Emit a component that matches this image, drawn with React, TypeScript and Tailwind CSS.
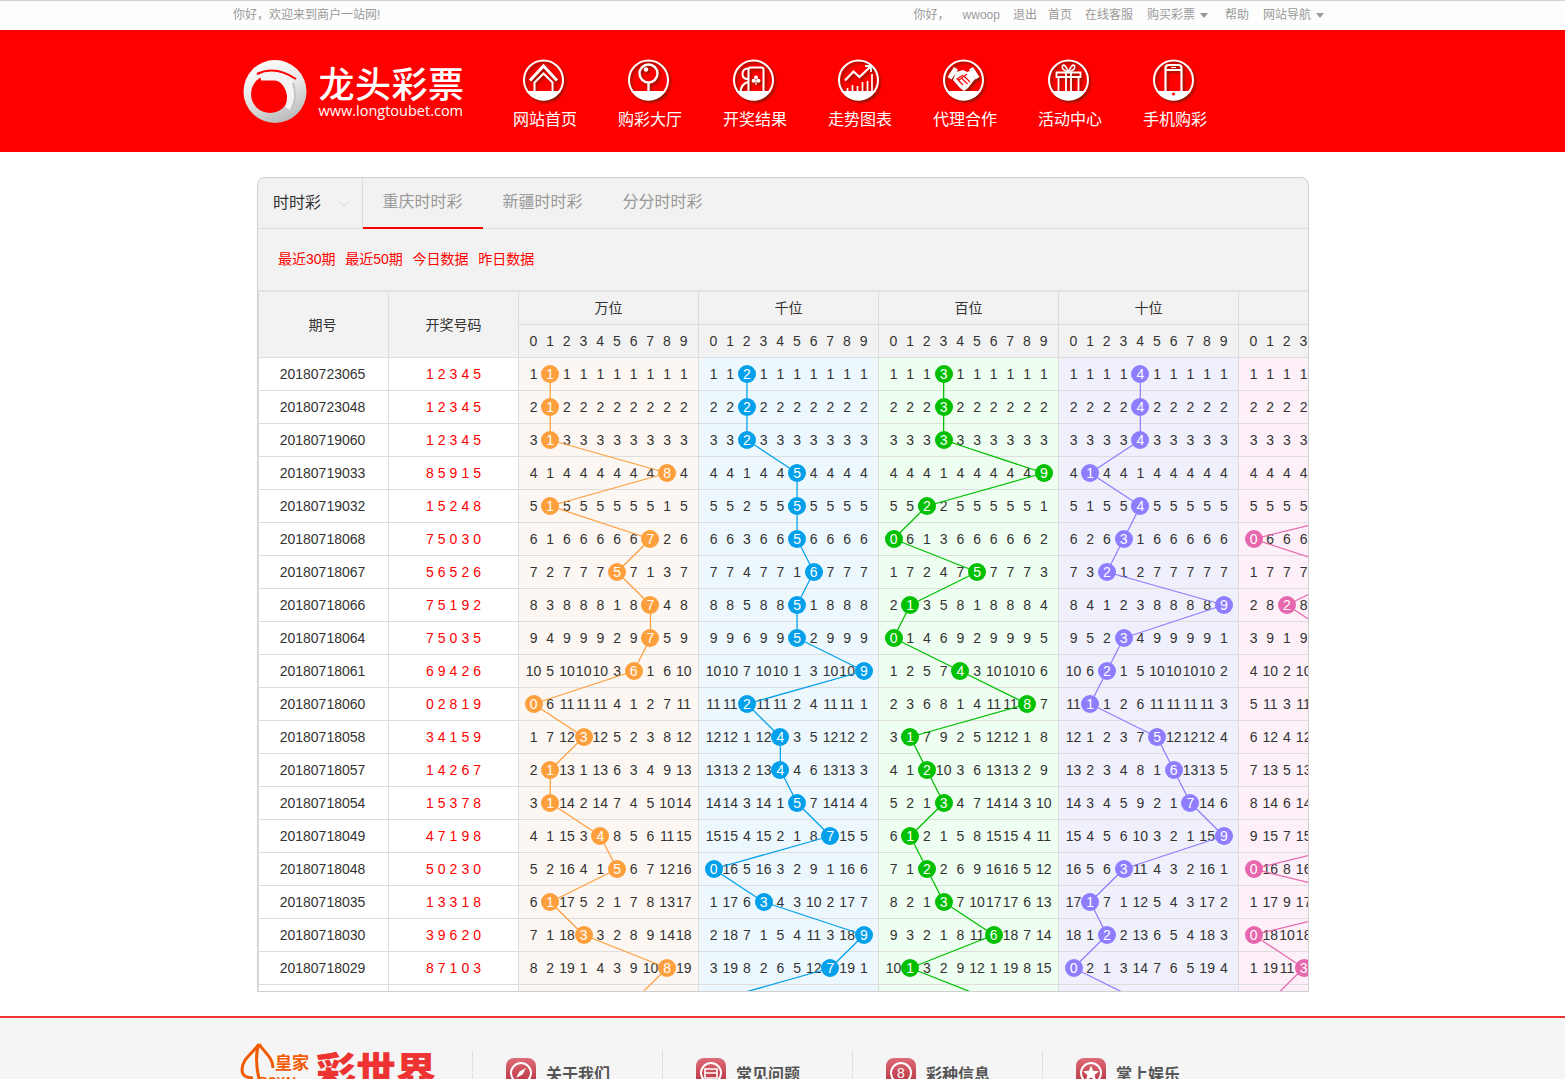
const rows = [
  { id: '20180723065', code: '12345', cols: ['1 1 1 1 1 1 1 1 1 1', '1 1 2 1 1 1 1 1 1 1', '1 1 1 3 1 1 1 1 1 1', '1 1 1 1 4 1 1 1 1 1', '1 1 1 1'] },
  { id: '20180723048', code: '12345', cols: ['2 1 2 2 2 2 2 2 2 2', '2 2 2 2 2 2 2 2 2 2', '2 2 2 3 2 2 2 2 2 2', '2 2 2 2 4 2 2 2 2 2', '2 2 2 2'] },
  { id: '20180719060', code: '12345', cols: ['3 1 3 3 3 3 3 3 3 3', '3 3 2 3 3 3 3 3 3 3', '3 3 3 3 3 3 3 3 3 3', '3 3 3 3 4 3 3 3 3 3', '3 3 3 3'] },
  { id: '20180719033', code: '85915', cols: ['4 1 4 4 4 4 4 4 8 4', '4 4 1 4 4 5 4 4 4 4', '4 4 4 1 4 4 4 4 4 9', '4 1 4 4 1 4 4 4 4 4', '4 4 4 4'] },
  { id: '20180719032', code: '15248', cols: ['5 1 5 5 5 5 5 5 1 5', '5 5 2 5 5 5 5 5 5 5', '5 5 2 2 5 5 5 5 5 1', '5 1 5 5 4 5 5 5 5 5', '5 5 5 5'] },
  { id: '20180718068', code: '75030', cols: ['6 1 6 6 6 6 6 7 2 6', '6 6 3 6 6 5 6 6 6 6', '0 6 1 3 6 6 6 6 6 2', '6 2 6 3 1 6 6 6 6 6', '0 6 6 6'] },
  { id: '20180718067', code: '56526', cols: ['7 2 7 7 7 5 7 1 3 7', '7 7 4 7 7 1 6 7 7 7', '1 7 2 4 7 5 7 7 7 3', '7 3 2 1 2 7 7 7 7 7', '1 7 7 7'] },
  { id: '20180718066', code: '75192', cols: ['8 3 8 8 8 1 8 7 4 8', '8 8 5 8 8 5 1 8 8 8', '2 1 3 5 8 1 8 8 8 4', '8 4 1 2 3 8 8 8 8 9', '2 8 2 8'] },
  { id: '20180718064', code: '75035', cols: ['9 4 9 9 9 2 9 7 5 9', '9 9 6 9 9 5 2 9 9 9', '0 1 4 6 9 2 9 9 9 5', '9 5 2 3 4 9 9 9 9 1', '3 9 1 9'] },
  { id: '20180718061', code: '69426', cols: ['10 5 10 10 10 3 6 1 6 10', '10 10 7 10 10 1 3 10 10 9', '1 2 5 7 4 3 10 10 10 6', '10 6 2 1 5 10 10 10 10 2', '4 10 2 10'] },
  { id: '20180718060', code: '02819', cols: ['0 6 11 11 11 4 1 2 7 11', '11 11 2 11 11 2 4 11 11 1', '2 3 6 8 1 4 11 11 8 7', '11 1 1 2 6 11 11 11 11 3', '5 11 3 11'] },
  { id: '20180718058', code: '34159', cols: ['1 7 12 3 12 5 2 3 8 12', '12 12 1 12 4 3 5 12 12 2', '3 1 7 9 2 5 12 12 1 8', '12 1 2 3 7 5 12 12 12 4', '6 12 4 12'] },
  { id: '20180718057', code: '14267', cols: ['2 1 13 1 13 6 3 4 9 13', '13 13 2 13 4 4 6 13 13 3', '4 1 2 10 3 6 13 13 2 9', '13 2 3 4 8 1 6 13 13 5', '7 13 5 13'] },
  { id: '20180718054', code: '15378', cols: ['3 1 14 2 14 7 4 5 10 14', '14 14 3 14 1 5 7 14 14 4', '5 2 1 3 4 7 14 14 3 10', '14 3 4 5 9 2 1 7 14 6', '8 14 6 14'] },
  { id: '20180718049', code: '47198', cols: ['4 1 15 3 4 8 5 6 11 15', '15 15 4 15 2 1 8 7 15 5', '6 1 2 1 5 8 15 15 4 11', '15 4 5 6 10 3 2 1 15 9', '9 15 7 15'] },
  { id: '20180718048', code: '50230', cols: ['5 2 16 4 1 5 6 7 12 16', '0 16 5 16 3 2 9 1 16 6', '7 1 2 2 6 9 16 16 5 12', '16 5 6 3 11 4 3 2 16 1', '0 16 8 16'] },
  { id: '20180718035', code: '13318', cols: ['6 1 17 5 2 1 7 8 13 17', '1 17 6 3 4 3 10 2 17 7', '8 2 1 3 7 10 17 17 6 13', '17 1 7 1 12 5 4 3 17 2', '1 17 9 17'] },
  { id: '20180718030', code: '39620', cols: ['7 1 18 3 3 2 8 9 14 18', '2 18 7 1 5 4 11 3 18 9', '9 3 2 1 8 11 6 18 7 14', '18 1 2 2 13 6 5 4 18 3', '0 18 10 18'] },
  { id: '20180718029', code: '87103', cols: ['8 2 19 1 4 3 9 10 8 19', '3 19 8 2 6 5 12 7 19 1', '10 1 3 2 9 12 1 19 8 15', '0 2 1 3 14 7 6 5 19 4', '1 19 11 3'] },
  { id: '', code: '60641', cols: ['', '', '', '', ''] },
]

const groups = [
  { name: '万位', bg: 'bg-[#fcf7f2]', ball: 'bg-[#fd9f3c]', line: '#fd9f3c' },
  { name: '千位', bg: 'bg-[#ecf8fe]', ball: 'bg-[#02a0ea]', line: '#02a0ea' },
  { name: '百位', bg: 'bg-[#eefef0]', ball: 'bg-[#00c000]', line: '#00c000' },
  { name: '十位', bg: 'bg-[#f0f0fc]', ball: 'bg-[#8f7dff]', line: '#8f7dff' },
  { name: '个位', bg: 'bg-[#fdf0f8]', ball: 'bg-[#e667ae]', line: '#e667ae' },
]

const navItems = ['网站首页', '购彩大厅', '开奖结果', '走势图表', '代理合作', '活动中心', '手机购彩']
const digits = [0, 1, 2, 3, 4, 5, 6, 7, 8, 9]

function Ground() {
  return <path d="M5.1 33H35.9A19.5 19.5 0 0 1 5.1 33Z" fill="#fff" />
}

function NavIcon({ index }: { index: number }) {
  return (
    <svg width="41" height="42" viewBox="0 0 41 42" fill="none" stroke="#fff" strokeWidth="2" className="drop-shadow-[2px_2px_1px_rgba(110,30,0,0.75)]">
      <circle cx="20.5" cy="21" r="19.5" />
      <Ground />
      {index === 0 && (
        <>
          <path d="M7 21.5 20.5 7 34 21.5" strokeWidth="3" />
          <path d="M11.5 33V23.5L20.5 14.5 29.5 23.5V33" />
        </>
      )}
      {index === 1 && (
        <>
          <circle cx="20.5" cy="14.5" r="9" strokeWidth="2.4" />
          <circle cx="18" cy="10.5" r="2.2" fill="#fff" stroke="none" />
          <path d="M20.5 23.5V33" strokeWidth="2.4" />
        </>
      )}
      {index === 2 && (
        <>
          <rect x="15.5" y="8.5" width="15" height="26" rx="2" />
          <path d="M15 9.5Q9.5 9.5 9.5 15 9.5 20 15 20M15 23Q8 25 7.5 33" />
          <circle cx="23" cy="18.5" r="2" fill="#fff" stroke="none" />
          <circle cx="20.6" cy="21.8" r="2" fill="#fff" stroke="none" />
          <circle cx="25.4" cy="21.8" r="2" fill="#fff" stroke="none" />
          <path d="M23 21V26" strokeWidth="1.2" />
        </>
      )}
      {index === 3 && (
        <>
          <path d="M7 21.5 15.5 12.5 21.5 18 32.5 7.5" strokeWidth="2.2" />
          <path d="M27 7H33V13" strokeWidth="1.8" />
          <path d="M9.5 33V29M14.5 33V26M19.5 33V27M24.5 33V23M29.5 33V22M34 33V15" strokeWidth="1.7" />
        </>
      )}
      {index === 4 && (
        <>
          <path d="M4.5 18 11 8 15 10.5 8.5 20.5ZM36.5 18 30 8 26 10.5 32.5 20.5Z" fill="#fff" stroke="none" />
          <path d="M13 13 20 11 24 13 28 11.5 32 20 25 29 21 32 17 29 10 21Z" fill="#fff" stroke="none" />
          <path d="M20 16 14 20 16 21 24 15M15 21 20 26M18.5 19 24.5 25M21.5 17.5 27 23" stroke="#f00" strokeWidth="1.1" />
        </>
      )}
      {index === 5 && (
        <>
          <path d="M8.5 13.5H32.5V18H8.5ZM10.5 18H30.5V33H10.5ZM18 13.5V33M23 13.5V33" strokeWidth="1.8" />
          <path d="M20.5 13Q13 11 14.5 6.5 17 4.5 20.5 13ZM20.5 13Q28 11 26.5 6.5 24 4.5 20.5 13Z" strokeWidth="1.6" />
        </>
      )}
      {index === 6 && (
        <>
          <rect x="12.5" y="6" width="16" height="29" rx="3" strokeWidth="2.2" />
          <path d="M12.5 11H28.5" />
          <path d="M18 8.5H23" strokeWidth="1" />
          <circle cx="20.5" cy="35" r="1.5" fill="#f00" stroke="none" />
        </>
      )}
    </svg>
  )
}

function Logo() {
  return (
    <svg width="64" height="66" viewBox="0 0 64 66">
      <defs>
        <linearGradient id="ring" x1="0.25" y1="0" x2="0.65" y2="1">
          <stop offset="0" stopColor="#ffffff" />
          <stop offset="0.5" stopColor="#e6e6e6" />
          <stop offset="1" stopColor="#b9b9b9" />
        </linearGradient>
      </defs>
      <circle cx="32" cy="32.5" r="31.5" fill="url(#ring)" />
      <circle cx="27" cy="35" r="19" fill="#f00" />
      <path d="M14 15Q32 6 53 20" fill="none" stroke="#f00" strokeWidth="2" />
      <path d="M17 15.5 28 13.5Q42 14 50 21.5 56 36 48 51.5L42 48Q47 36 40 26.5 36 21.5 31.5 21.5L18 21.5Z" fill="#f4f4f4" />
      <path d="M50 24Q55 38 48 51" fill="none" stroke="#c4c4c4" strokeWidth="2" />
    </svg>
  )
}

function FooterIcon({ index }: { index: number }) {
  return (
    <div className="w-[30px] h-[30px] rounded-[8px] bg-gradient-to-b from-[#dd6b78] to-[#b12536] flex items-center justify-center">
      <svg width="24" height="24" viewBox="0 0 24 24" fill="none" stroke="#fff" strokeWidth="2">
        <circle cx="12" cy="12" r="10" />
        {index === 0 && <path d="M17 7 13.5 13.5 7 17 10.5 10.5Z" fill="#fff" stroke="none" />}
        {index === 1 && <path d="M6 8H18V17H6ZM6 12H18" strokeWidth="1.6" />}
        {index === 2 && (
          <text x="12" y="17" textAnchor="middle" fontSize="14" fill="#fff" stroke="none" fontFamily="Liberation Sans">8</text>
        )}
        {index === 3 && <path d="M12 4.5 14.2 9.8 20 10.2 15.6 13.9 17 19.5 12 16.5 7 19.5 8.4 13.9 4 10.2 9.8 9.8Z" fill="#fff" stroke="none" />}
      </svg>
    </div>
  )
}

function Caret() {
  return <span className="ml-[5px] w-0 h-0 border-x-[4px] border-x-transparent border-t-[5px] border-t-[#999]" />
}

function TrendLines() {
  const x = (g: number, i: number) => 261 + 180 * g + 6.2 + (i + 0.5) * 16.7
  const y = (r: number) => 16 + 33 * r
  return (
    <svg className="absolute left-0 top-0" width="1050" height="660" fill="none">
      {groups.map((group, g) => (
        <g key={group.name} stroke={group.line} strokeWidth="1.25">
          {rows.slice(1).map((row, r) => (
            <line key={r} x1={x(g, Number(rows[r].code[g]))} y1={y(r)} x2={x(g, Number(row.code[g]))} y2={y(r + 1)} />
          ))}
        </g>
      ))}
    </svg>
  )
}

export default function App() {
  return (
    <div className="h-[1079px] overflow-hidden bg-white text-[#333] font-['Liberation_Sans','Noto_Sans_CJK_SC',sans-serif]">
      {/* top strip */}
      <div className="h-[30px] border-t border-[#d0d0d0] bg-[#fdfdfd] text-xs text-[#999]">
        <div className="ml-[233px] w-[1091px] h-[28px] flex items-center justify-between">
          <span>你好，欢迎来到商户一站网!</span>
          <div className="flex items-center">
            <span>你好，</span>
            <span className="ml-[13px]">wwoop</span>
            <span className="ml-[13px]">退出</span>
            <span className="ml-[11px]">首页</span>
            <span className="ml-[13px]">在线客服</span>
            <span className="ml-[14px]">购买彩票</span>
            <Caret />
            <span className="ml-[17px]">帮助</span>
            <span className="ml-[14px]">网站导航</span>
            <Caret />
          </div>
        </div>
      </div>

      {/* red header */}
      <div className="h-[122px] bg-[#f00]">
        <div className="mx-auto w-[1100px] flex">
          <div className="w-[260px] shrink-0 pl-[10px] pt-[29px] flex">
            <Logo />
            <div className="ml-[12px] text-white">
              <div className="mt-[4px] text-[36px] leading-[46px] font-medium tracking-[0.5px]">龙头彩票</div>
              <div className="-mt-[7px] text-[14.5px] leading-[18px] font-['Open_Sans',sans-serif]">www.longtoubet.com</div>
            </div>
          </div>
          {navItems.map((item, i) => (
            <div key={item} className="w-[105px] pt-[29px] flex flex-col items-center">
              <div className="mr-[4px]">
                <NavIcon index={i} />
              </div>
              <span className="mt-[7px] text-base leading-6 text-white">{item}</span>
            </div>
          ))}
        </div>
      </div>

      {/* panel */}
      <div className="ml-[257px] mt-[25px] w-[1052px] h-[815px] overflow-hidden rounded-t-[8px] border border-[#cfcfcf] bg-[#f2f2f2]">
        <div className="h-[51px] flex border-b border-[#ddd]">
          <div className="w-[105px] flex items-center justify-between border-r border-[#ddd] pl-[15px] pr-[12px] text-base">
            <span>时时彩</span>
            <svg width="12" height="8" viewBox="0 0 12 8" fill="none" stroke="#cfd6d6" className="mt-[2px]">
              <path d="M1 1.5 6 6.5 11 1.5" />
            </svg>
          </div>
          <span className="w-[120px] h-[51px] border-b-2 border-[#f00] pt-[12px] pr-[1px] text-center text-base text-[#999]">重庆时时彩</span>
          <span className="w-[120px] pt-[12px] pr-[1px] text-center text-base text-[#999]">新疆时时彩</span>
          <span className="w-[120px] pt-[12px] pr-[1px] text-center text-base text-[#999]">分分时时彩</span>
        </div>
        <div className="h-[63px] pb-[1px] flex items-center gap-[9.7px] border-b-2 border-[#e2e2e2] pl-[20px] text-sm text-[#f00]">
          <span>最近30期</span>
          <span>最近50期</span>
          <span>今日数据</span>
          <span>昨日数据</span>
        </div>

        {/* table head */}
        <div className="h-[66px] flex border-b border-[#ddd] text-sm">
          <div className="w-[131px] shrink-0 flex items-center justify-center border-x border-[#ddd] pr-[2px]">期号</div>
          <div className="w-[130px] shrink-0 flex items-center justify-center border-r border-[#ddd]">开奖号码</div>
          {groups.map((group) => (
            <div key={group.name} className="w-[180px] shrink-0 border-r border-[#ddd]">
              <div className="h-[33px] flex items-center justify-center border-b border-[#ddd]">{group.name}</div>
              <div className="h-[32px] px-[6px] grid grid-cols-10 items-center text-center">
                {digits.map((d) => (
                  <span key={d}>{d}</span>
                ))}
              </div>
            </div>
          ))}
        </div>

        {/* table body */}
        <div className="relative bg-white text-sm">
          {rows.map((row) => (
            <div key={row.code + row.id} className="h-[33px] flex border-b border-[#ddd]">
              <div className="w-[131px] shrink-0 flex items-center justify-center border-x border-[#ddd] pr-[2px]">{row.id}</div>
              <div className="w-[130px] shrink-0 flex items-center justify-center border-r border-[#ddd] pl-[4px] tracking-[4px] text-[#f00]">
                {row.id && row.code}
              </div>
              {groups.map((group, g) => (
                <div key={group.name} className={`w-[180px] shrink-0 border-r border-[#ddd] pl-[6.2px] pr-[5.8px] grid grid-cols-10 items-center text-center ${group.bg}`}>
                  {row.cols[g].split(' ').filter(Boolean).map((value, i) =>
                    i === Number(row.code[g]) ? (
                      <span key={i} className="flex justify-center">
                        <span className={`relative z-10 w-[18px] h-[18px] shrink-0 rounded-full flex items-center justify-center text-white ${group.ball}`}>
                          {row.code[g]}
                        </span>
                      </span>
                    ) : (
                      <span key={i} className="flex justify-center">{value}</span>
                    )
                  )}
                </div>
              ))}
            </div>
          ))}
          <TrendLines />
        </div>
      </div>

      {/* footer */}
      <div className="mt-[24px] h-[100px] border-t-2 border-[#ee3333] bg-[#f5f5f5]">
        <div className="ml-[240px] flex">
          <div className="w-[232px] shrink-0 flex">
            <div className="relative w-[68px] h-[60px] shrink-0 text-[#f25a00]">
              <svg width="36" height="40" viewBox="0 0 36 40" fill="none" stroke="#f25a00" strokeWidth="3" className="mt-[25px]">
                <path d="M19 1C12 11 2 16 2 27 2 32 6 35 13 35M19 1C25 10 33 15 33 25M19 1Q14 14 19 36" />
              </svg>
              <span className="absolute left-[35px] top-[36px] text-[17px] leading-5 font-bold whitespace-nowrap">皇家</span>
              <span className="absolute left-[18px] top-[56px] text-xs leading-4 italic font-bold">ROYAL</span>
            </div>
            <span className="ml-[8px] mt-[29px] text-[40px] leading-[50px] font-black text-[#ee3333] whitespace-nowrap">彩世界</span>
          </div>
          {['关于我们', '常见问题', '彩种信息', '掌上娱乐'].map((item, i) => (
            <div key={item} className="w-[190px] shrink-0 mt-[34px] h-[30px] pt-[6px] border-l border-dotted border-[#ccc] pl-[33px] flex items-start">
              <FooterIcon index={i} />
              <span className="ml-[10px] mt-[5px] text-base leading-6 font-bold text-[#555]">{item}</span>
            </div>
          ))}
        </div>
      </div>
    </div>
  )
}
